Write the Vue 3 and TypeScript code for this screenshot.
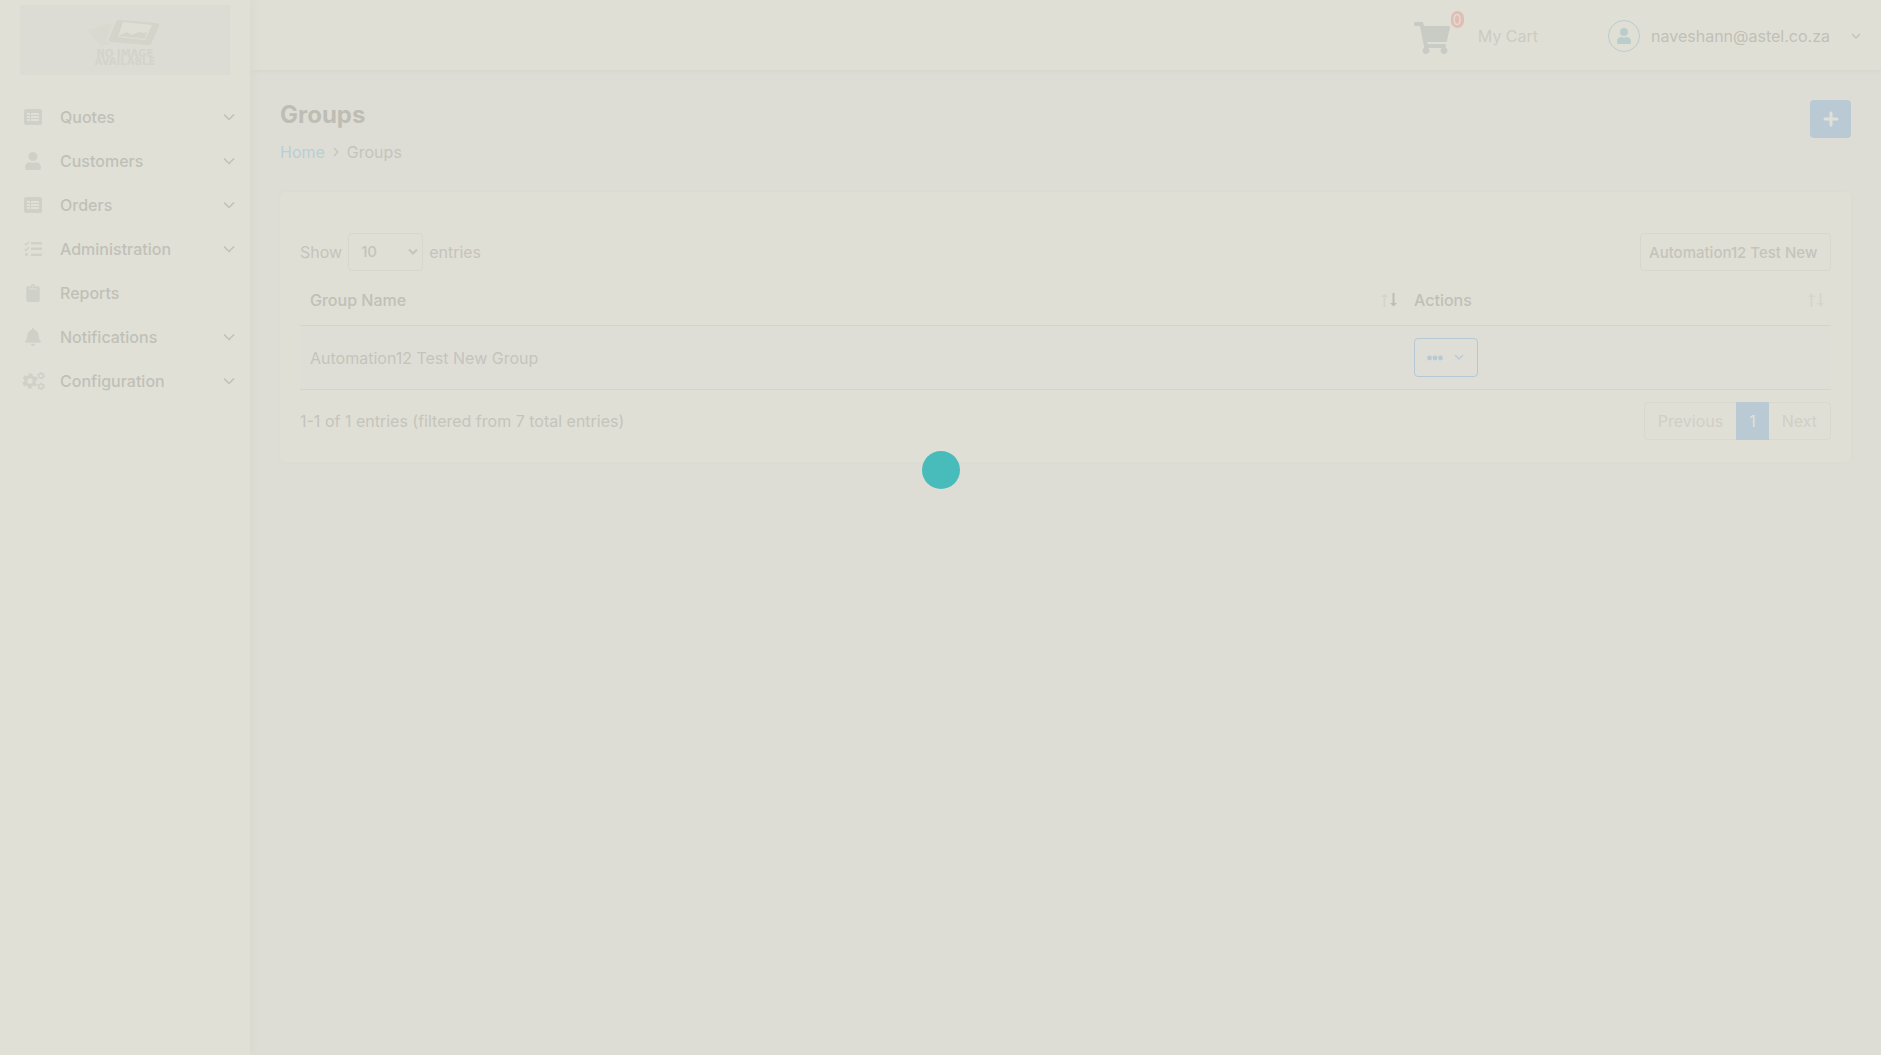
<script setup lang="ts">
import { ref } from 'vue'

interface NavItem {
  label: string
  icon: string
  expandable: boolean
}

const navItems: NavItem[] = [
  { label: 'Quotes', icon: 'list', expandable: true },
  { label: 'Customers', icon: 'user', expandable: true },
  { label: 'Orders', icon: 'list', expandable: true },
  { label: 'Administration', icon: 'tasks', expandable: true },
  { label: 'Reports', icon: 'clipboard', expandable: false },
  { label: 'Notifications', icon: 'bell', expandable: true },
  { label: 'Configuration', icon: 'cogs', expandable: true },
]

const groups = ['Automation12 Test New Group']
const search = ref('Automation12 Test New Group')
const pageSize = ref('10')
</script>

<template>
  <div class="app">
    <aside class="sidebar">
      <a class="logo" href="#" aria-label="Home">
        <svg width="210" height="70" viewBox="0 0 210 70">
          <path d="M67 25 92 18 86 36 91 39 81 41Z" fill="#d9d9d0" />
          <path d="M99 15 137 18Q140 19 139 21L131 39Q130 41 127 40L91 37Q88 36 89 34L96 17Q97 15 99 15Z" fill="#d4d4cb" />
          <path d="M103 17 132 20 125 35 98 32Z" fill="#dfdfd6" />
          <path d="M98 31 107 27 111 30 119 27 124 28 127 27 125 34Z" fill="#d4d4cb" />
          <text x="105" y="52" text-anchor="middle">NO IMAGE</text>
          <text x="105" y="60" text-anchor="middle">AVAILABLE</text>
        </svg>
      </a>
      <nav>
        <a v-for="item in navItems" :key="item.label" class="nav-item" href="#">
          <span class="nav-icon">
            <svg v-if="item.icon === 'list'" width="18" height="16" viewBox="0 0 18 16">
              <path fill-rule="evenodd" d="M2 0H16Q18 0 18 2V14Q18 16 16 16H2Q0 16 0 14V2Q0 0 2 0ZM3 4V6H6V4ZM7 4V6H15V4ZM3 7V9H6V7ZM7 7V9H15V7ZM3 10V12H6V10ZM7 10V12H15V10Z" />
            </svg>
            <svg v-else-if="item.icon === 'user'" width="16" height="18" viewBox="0 0 448 512">
              <path d="M224 256A128 128 0 1 0 224 0a128 128 0 0 0 0 256zm90 32h-17a174 174 0 0 1-146 0h-17C60 288 0 348 0 422v42c0 27 21 48 48 48h352c27 0 48-21 48-48v-42c0-74-60-134-134-134z" />
            </svg>
            <svg v-else-if="item.icon === 'tasks'" width="18" height="16" viewBox="0 0 18 16">
              <path d="M7 1h11v2.500H7zM7 6.500h11v2.500H7zM7 12.500h11v2.500H7z" />
              <circle cx="2.500" cy="13.500" r="1.600" />
              <path d="M.5 2.500 2 4 5 .7M.5 8 2 9.500 5 6.200" fill="none" stroke="currentColor" stroke-width="1.500" />
            </svg>
            <svg v-else-if="item.icon === 'clipboard'" width="14" height="18" viewBox="0 0 384 512">
              <path fill-rule="evenodd" d="M336 64h-80a64 64 0 0 0-128 0H48C21 64 0 85 0 112v352c0 27 21 48 48 48h288c27 0 48-21 48-48V112c0-27-21-48-48-48zM192 40a24 24 0 1 1 0 48 24 24 0 0 1 0-48zM84 128h216q12 0 12 12t-12 12H84q-12 0-12-12t12-12z" />
            </svg>
            <svg v-else-if="item.icon === 'bell'" width="16" height="18" viewBox="0 0 448 512">
              <path d="M224 512c35 0 64-29 64-64H160c0 35 29 64 64 64zm215-150c-19-21-55-52-55-154 0-78-54-140-128-155V32a32 32 0 1 0-64 0v21C118 68 64 130 64 208c0 102-36 133-55 154-6 6-9 14-9 22 0 16 13 32 32 32h384c19 0 32-16 32-32 0-8-3-16-9-22z" />
            </svg>
            <svg v-else class="gears" width="23" height="18" viewBox="0 0 23 18">
              <circle cx="8" cy="9" r="4.300" stroke-width="3.200" />
              <circle cx="8" cy="9" r="6.500" stroke-width="2.400" stroke-dasharray="3.800 3.007" stroke-dashoffset="1.900" transform="rotate(30 8 9)" />
              <circle cx="19" cy="3.700" r="2.200" stroke-width="1.400" />
              <circle cx="19" cy="3.700" r="3.200" stroke-width="1.300" stroke-dasharray="1.900 1.451" />
              <circle cx="19" cy="14.300" r="2.200" stroke-width="1.400" />
              <circle cx="19" cy="14.300" r="3.200" stroke-width="1.300" stroke-dasharray="1.900 1.451" />
            </svg>
          </span>
          <span class="nav-label">{{ item.label }}</span>
          <svg v-if="item.expandable" class="line" width="12" height="8" viewBox="0 0 12 8">
            <path d="M1 1.500 6 6.500 11 1.500" stroke-width="1.500" />
          </svg>
        </a>
      </nav>
    </aside>

    <div class="page">
      <header class="topbar">
        <a class="cart" href="#">
          <span class="cart-icon">
            <svg width="36" height="32" viewBox="0 0 576 512">
              <path d="M528 301 575 93c4-15-8-29-23-29H159l-9-45C148 8 138 0 126 0H24C11 0 0 11 0 24v16c0 13 11 24 24 24h70l70 343a56 56 0 1 0 67 9h210a56 56 0 1 0 64-10l5-25c4-15-8-29-23-29H218l-7-32h294c11 0 21-8 23-19z" />
            </svg>
            <span class="badge">0</span>
          </span>
          <span>My Cart</span>
        </a>
        <button class="account" type="button">
          <span class="avatar">
            <svg width="14" height="16" viewBox="0 0 448 512">
              <path d="M224 256A128 128 0 1 0 224 0a128 128 0 0 0 0 256zm90 32h-17a174 174 0 0 1-146 0h-17C60 288 0 348 0 422v42c0 27 21 48 48 48h352c27 0 48-21 48-48v-42c0-74-60-134-134-134z" />
            </svg>
          </span>
          <span>naveshann@astel.co.za</span>
          <svg class="line" width="10" height="7" viewBox="0 0 10 7">
            <path d="M1 1 5 5 9 1" stroke-width="1.200" />
          </svg>
        </button>
      </header>

      <main>
        <div class="heading">
          <div>
            <h1>Groups</h1>
            <div class="breadcrumb">
              <a href="#">Home</a>
              <svg class="line" width="6" height="10" viewBox="0 0 6 10">
                <path d="M1 1 5 5 1 9" stroke-width="1.200" />
              </svg>
              <span>Groups</span>
            </div>
          </div>
          <button class="add" type="button" aria-label="Add group">
            <svg width="16" height="16" viewBox="0 0 16 16">
              <path d="M8 2V14M2 8H14" stroke="currentColor" stroke-width="3" stroke-linecap="round" />
            </svg>
          </button>
        </div>

        <section class="card">
          <div class="tools">
            <label class="length">
              Show
              <span class="select-wrap">
                <select v-model="pageSize">
                  <option>10</option>
                  <option>25</option>
                  <option>50</option>
                </select>
                <svg class="line" width="10" height="8" viewBox="0 0 10 8">
                  <path d="M1 1.500 5 5.500 9 1.500" stroke-width="2" />
                </svg>
              </span>
              entries
            </label>
            <input v-model="search" type="text" aria-label="Search groups" />
          </div>

          <table>
            <thead>
              <tr>
                <th>
                  <span class="th-inner">Group Name
                    <svg width="16" height="14" viewBox="0 0 16 14">
                      <path d="M3.500 14V3" class="sort" /><path d="M0 4 3.500 .5 7 4Z" fill="#d6d5cc" />
                      <path d="M12.500 0V11" class="sort on" /><path d="M9 10 12.500 13.500 16 10Z" fill="#bebdb4" />
                    </svg>
                  </span>
                </th>
                <th class="actions-col">
                  <span class="th-inner">Actions
                    <svg width="16" height="14" viewBox="0 0 16 14">
                      <path d="M3.500 14V3" class="sort" /><path d="M0 4 3.500 .5 7 4Z" fill="#d6d5cc" />
                      <path d="M12.500 0V11" class="sort" /><path d="M9 10 12.500 13.500 16 10Z" fill="#d6d5cc" />
                    </svg>
                  </span>
                </th>
              </tr>
            </thead>
            <tbody>
              <tr v-for="group in groups" :key="group">
                <td>{{ group }}</td>
                <td>
                  <button class="actions" type="button" aria-label="Group actions">
                    <svg width="16" height="6" viewBox="0 0 16 6" fill="currentColor">
                      <circle cx="2.500" cy="3" r="2.400" /><circle cx="8" cy="3" r="2.400" /><circle cx="13.500" cy="3" r="2.400" />
                    </svg>
                    <svg class="line" width="10" height="7" viewBox="0 0 10 7">
                      <path d="M1 1 5 5 9 1" stroke-width="1.300" />
                    </svg>
                  </button>
                </td>
              </tr>
            </tbody>
          </table>

          <div class="foot">
            <span>1-1 of 1 entries (filtered from 7 total entries)</span>
            <div class="pager">
              <button type="button">Previous</button>
              <button type="button" class="current">1</button>
              <button type="button">Next</button>
            </div>
          </div>
        </section>
      </main>
    </div>

    <div class="loader" role="status" aria-label="Loading"></div>
  </div>
</template>

<style>
body {
  background: #deddd5;
}
</style>

<style scoped>
* {
  box-sizing: border-box;
}

.app {
  display: flex;
  min-height: 100vh;
  color: #c5c4bb;
  font: 400 16px/24px Inter, sans-serif;
}

a {
  color: inherit;
  text-decoration: none;
}

svg {
  flex: none;
  fill: currentColor;
}

.line,
.gears {
  fill: none;
  stroke: currentColor;
}

button,
input,
select {
  font: inherit;
  color: inherit;
}

button {
  cursor: pointer;
}

.sidebar {
  position: relative;
  flex: none;
  width: 250px;
  padding: 5px 0;
  background: #e0e0d7;
  box-shadow: 0 0 10px #d6d6cd;
}

.logo {
  display: block;
  width: 210px;
  height: 70px;
  margin: 0 auto 20px;
  background: #dddcd4;
}

.logo text {
  font-family: "DejaVu Sans", sans-serif;
  font-size: 10px;
  font-weight: 700;
  fill: #d3d3ca;
}

.nav-item {
  display: flex;
  align-items: center;
  height: 44px;
  padding: 0 15px 0 20px;
  color: #c1c0b7;
  font-weight: 500;
}

.nav-icon {
  display: flex;
  justify-content: center;
  width: 26px;
  margin-right: 14px;
  color: #cfd1c9;
}

.nav-label {
  flex: 1;
}

.page {
  flex: 1;
  min-width: 0;
}

.topbar {
  display: flex;
  align-items: center;
  justify-content: flex-end;
  gap: 70px;
  height: 70px;
  padding: 2px 20px 0 0;
  background: #e0dfd6;
  box-shadow: 0 1px 4px #d4d4cb;
}

.cart {
  display: flex;
  align-items: center;
  gap: 28px;
  color: #cccbc3;
}

.cart-icon {
  position: relative;
  display: flex;
  padding-top: 4px;
  color: #c9ccc5;
}

.badge {
  position: absolute;
  top: -7px;
  left: 37px;
  padding: 0 2px;
  border-radius: 7px;
  background: #e2bdb5;
  color: #e0dfd6;
  font-size: 14px;
  line-height: 17px;
}

.account {
  display: flex;
  align-items: center;
  gap: 11px;
  padding: 0;
  border: 0;
  background: none;
  color: #c1c0b7;
}

.account .line {
  margin-left: 10px;
}

.avatar {
  display: flex;
  align-items: center;
  justify-content: center;
  width: 32px;
  height: 32px;
  border: 1px solid #b9cdcd;
  border-radius: 50%;
  color: #b9cdcd;
}

main {
  padding: 30px;
}

.heading {
  display: flex;
  align-items: flex-start;
  justify-content: space-between;
  margin-bottom: 28px;
}

h1 {
  margin: 0 0 10px;
  color: #bebdb4;
  font-size: 24px;
  font-weight: 700;
  line-height: 30px;
}

.breadcrumb {
  display: flex;
  align-items: center;
  gap: 8px;
}

.breadcrumb a {
  color: #b6cfd6;
}

.add {
  display: flex;
  align-items: center;
  justify-content: center;
  width: 41px;
  height: 38px;
  padding: 0;
  border: 0;
  border-radius: 4px;
  background: #bacad4;
  color: #e0e0d7;
}

.card {
  padding: 41px 20px 22px;
  border-radius: 5px;
  background: #e0dfd6;
  box-shadow: 0 0 4px #dad9d0;
}

.tools,
.foot {
  display: flex;
  align-items: center;
  justify-content: space-between;
}

.length {
  display: flex;
  align-items: center;
  gap: 6px;
}

.select-wrap {
  display: flex;
  align-items: center;
}

.select-wrap .line {
  margin-left: -15px;
  margin-right: 5px;
  pointer-events: none;
}

select {
  width: 75px;
  height: 38px;
  padding: 0 12px;
  appearance: none;
  border: 1px solid #d8d7ce;
  border-radius: 4px;
  background: transparent;
  font-size: 15px;
  font-weight: 500;
}

input {
  width: 191px;
  height: 38px;
  padding: 0 12px 0 8px;
  appearance: none;
  border: 1px solid #d8d7ce;
  border-radius: 4px;
  background: transparent;
  font-size: 15px;
  font-weight: 500;
}

table {
  width: 100%;
  border-collapse: separate;
  border-spacing: 0;
  table-layout: fixed;
}

th,
td {
  padding: 12px 10px;
  border-bottom: 1px solid #d5d4cb;
  text-align: left;
}

th {
  height: 55px;
  padding: 4px 7px 0 10px;
  font-weight: 500;
  color: #c1c0b7;
}

.actions-col {
  width: 427px;
}

.th-inner {
  display: flex;
  align-items: center;
  justify-content: space-between;
}

.sort {
  stroke: #d6d5cc;
  stroke-width: 2;
}

.sort.on {
  stroke: #bebdb4;
}

td {
  background: #dfded6;
}

td:last-child {
  padding-left: 10px;
}

.actions {
  display: flex;
  align-items: center;
  justify-content: space-between;
  width: 64px;
  height: 39px;
  padding: 0 13px 0 12px;
  border: 1px solid #b5c8d4;
  border-radius: 4px;
  background: transparent;
  color: #b8c9d4;
}

.foot {
  margin-top: 12px;
}

.pager {
  display: flex;
  border: 1px solid #d9d8cf;
  border-radius: 4px;
  color: #d0cfc6;
}

.pager button {
  height: 36px;
  padding: 0 13px;
  border: 0;
  background: none;
}

.pager .current {
  height: 38px;
  margin: -1px 0;
  background: #bacad4;
  color: #e0e0d7;
}

.loader {
  position: absolute;
  top: 451px;
  left: 50%;
  width: 38px;
  height: 38px;
  margin-left: -19px;
  border-radius: 50%;
  background: #48bbbb;
}
</style>
